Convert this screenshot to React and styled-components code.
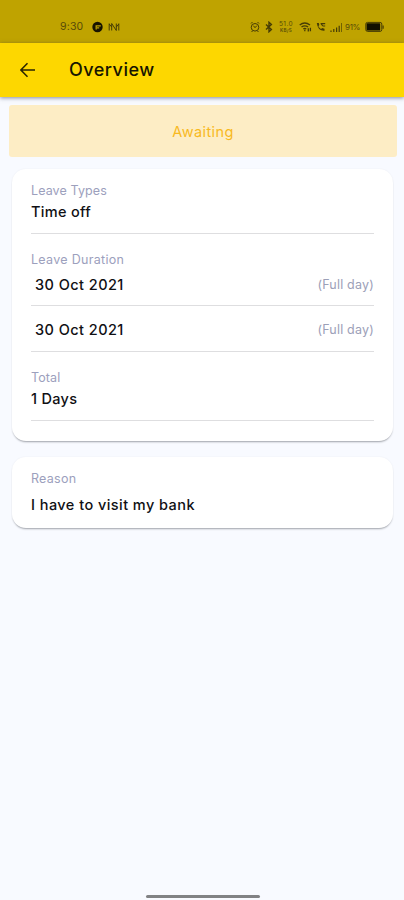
import styled, { createGlobalStyle } from "styled-components";

const GlobalStyle = createGlobalStyle`
  * {
    box-sizing: border-box;
  }

  body {
    margin: 0;
    background-color: #f8faff;
    font-family: Inter, Roboto, "Liberation Sans", sans-serif;
  }
`;

const Screen = styled.div`
  display: flex;
  flex-direction: column;
  width: 100%;
  height: 900px;
  overflow: hidden;
  background-color: #f8faff;
`;

const StatusBar = styled.div`
  display: flex;
  align-items: center;
  height: 43px;
  flex-shrink: 0;
  padding: 10px 20px 0 60px;
  background-color: #bfa300;
  color: #574b08;
`;

const Clock = styled.span`
  width: 32px;
  font-size: 10.5px;
  line-height: 14px;
  letter-spacing: 0.2px;
`;

const StatusIcon = styled.svg`
  display: block;
  flex-shrink: 0;
  width: ${(props) => props.$width}px;
  height: 12px;
  margin-left: ${(props) => props.$gap || 0}px;
  fill: none;
  stroke: #463c05;
`;

const Spacer = styled.div`
  flex: 1;
`;

const Speed = styled.div`
  display: flex;
  flex-direction: column;
  align-items: center;
  width: 16px;
  margin-left: 5px;
  font-size: 6.5px;
  line-height: 8px;
  letter-spacing: 0.4px;

  small {
    font-size: 4.5px;
    font-weight: 600;
    line-height: 6px;
    letter-spacing: 0.3px;
  }
`;

const Percent = styled.span`
  width: 16px;
  margin-left: 3px;
  font-size: 8px;
  line-height: 12px;
  letter-spacing: -0.3px;
`;

const AppBar = styled.header`
  display: flex;
  align-items: center;
  height: 54px;
  flex-shrink: 0;
  padding-left: 20px;
  background-color: #fdd700;
  box-shadow: 0 1px 4px rgba(40, 50, 80, 0.55);
`;

const BackButton = styled.button`
  display: flex;
  width: 16px;
  height: 16px;
  padding: 0;
  border: none;
  background: none;
`;

const Title = styled.h1`
  margin: 0 0 0 33px;
  color: #171500;
  font-size: 18px;
  font-weight: 500;
  line-height: 24px;
  letter-spacing: 0.5px;
`;

const Banner = styled.div`
  display: flex;
  justify-content: center;
  align-items: center;
  height: 52px;
  flex-shrink: 0;
  margin: 8px 7px 0 9px;
  border-radius: 3px;
  background-color: #fdedc5;
  color: #f8b91f;
  font-size: 14.5px;
  letter-spacing: 0.4px;
`;

const Card = styled.section`
  height: ${(props) => props.$height}px;
  flex-shrink: 0;
  margin: ${(props) => props.$top}px 11px 0 12px;
  padding: 12px 19px 0;
  border-radius: 14px;
  background-color: #fff;
  box-shadow: 0 2px 2px -1px rgba(30, 35, 45, 0.4), 0 0 2px rgba(30, 35, 45, 0.06);
`;

const Field = styled.div`
  height: ${(props) => props.$height}px;
  margin-bottom: ${(props) => props.$after || 0}px;
  border-bottom: 1px solid #dedee0;
`;

const Label = styled.div`
  padding-top: 1px;
  color: #9ca0bd;
  font-size: 12.5px;
  line-height: 18px;
  letter-spacing: ${(props) => props.$spacing || 0.1}px;
`;

const Value = styled.div`
  margin-top: ${(props) => props.$top || 0}px;
  color: #101014;
  font-size: 14.5px;
  font-weight: 500;
  line-height: 24px;
  letter-spacing: ${(props) => props.$spacing || 0.3}px;
`;

const DateRow = styled.div`
  display: flex;
  justify-content: space-between;
  align-items: center;
  padding: ${(props) => props.$top}px 0 0 4px;
`;

const DayPart = styled.span`
  color: #9ca0b8;
  font-size: 12.5px;
  line-height: 18px;
  letter-spacing: 0.2px;
`;

const HomeIndicator = styled.div`
  width: 114px;
  height: 3px;
  flex-shrink: 0;
  margin: auto auto 2px 146px;
  border-radius: 2px;
  background-color: #818284;
`;

const dates = [
  { date: "30 Oct 2021", part: "(Full day)" },
  { date: "30 Oct 2021", part: "(Full day)" },
];

const StatusIcons = () => (
  <>
    <StatusIcon $width={10} viewBox="0 0 10 12" strokeWidth="1">
      <path d="M1 2.5 2.5 1M9 2.5 7.5 1M2.5 10 1.5 11M7.5 10l1 1" />
      <circle cx="5" cy="6.3" r="3.8" />
      <path d="m3.4 4.7 1.6 2 1.8-2" />
    </StatusIcon>
    <StatusIcon $width={8} $gap={5} viewBox="0 0 8 12" strokeWidth="1.4">
      <path d="m1 3.4 5.4 5L4 10.7V1.3l2.4 2.3L1 8.6" />
    </StatusIcon>
    <Speed>
      51.0
      <small>KB/S</small>
    </Speed>
    <StatusIcon $width={13} $gap={5} viewBox="0 0 13 12" strokeWidth="1.3">
      <path d="M.7 4.1Q5.7-.1 11 4.1M2.5 6.1q3.3-2.6 6.6 0M4.3 8q1.5-1.1 3 0" />
      <path d="M5.8 8.5v1.7M9.3 7.2v3.4M11.4 6.8v3.4" />
    </StatusIcon>
    <StatusIcon $width={10} $gap={4} viewBox="0 0 10 12" strokeWidth="1.1">
      <path
        d="M.8 2h2l.5 2-.9 1.2q.8 1.7 2.6 2.7l1.2-.9 2.3.7v2Q1.8 10.2.8 2Z"
        fill="#463c05"
        stroke="none"
      />
      <path d="M4.6 2.6h4.6M6.6 5h2.6M5 2.6l1.6 2.2" />
    </StatusIcon>
    <StatusIcon $width={12} $gap={4} viewBox="0 0 12 12" strokeWidth="1.2">
      <path d="M1 11V9.4M3.8 11V8.1M6.6 11V6.4M9.2 11V4.7" />
      <path d="M11.6 11V2" strokeWidth=".7" />
    </StatusIcon>
    <Percent>91%</Percent>
    <StatusIcon $width={19} $gap={4} viewBox="0 0 19 12">
      <rect x=".8" y="1.4" width="16" height="9" rx="1.7" />
      <rect x="1.6" y="2.3" width="13.6" height="7.2" rx=".5" fill="#111000" stroke="none" />
      <path d="M18.1 4.5v3.3" strokeWidth="1.2" />
    </StatusIcon>
  </>
);

const App = () => {
  return (
    <>
      <GlobalStyle />
      <Screen>
        <StatusBar>
          <Clock>9:30</Clock>
          <StatusIcon $width={11} viewBox="0 0 11 12">
            <circle cx="5.5" cy="6" r="5.2" fill="#171300" stroke="none" />
            <path d="M4.2 8.4V4.9h4.6M5 6.9h2.2" stroke="#bfa300" strokeWidth="1.3" />
          </StatusIcon>
          <StatusIcon $width={12} $gap={5} viewBox="0 0 12 12" strokeWidth="1">
            <path d="M1.2 2.5v7M10.8 2.5v7M3.7 9.5v-7l4.6 7v-7M1.2 3l2.5 3M8.3 6l2.5-3" />
          </StatusIcon>
          <Spacer />
          <StatusIcons />
        </StatusBar>
        <AppBar>
          <BackButton aria-label="Back">
            <svg width="16" height="16" viewBox="0 0 16 16" fill="none" stroke="#292500" strokeWidth="1.5">
              <path d="M15 8H1M7.5 1.2.9 8l6.6 6.8" />
            </svg>
          </BackButton>
          <Title>Overview</Title>
        </AppBar>
        <Banner>Awaiting</Banner>
        <Card $height={272} $top={12}>
          <Field $height={53} $after={16}>
            <Label>Leave Types</Label>
            <Value>Time off</Value>
          </Field>
          <Label $spacing={0.3}>Leave Duration</Label>
          {dates.map((item, index) => (
            <Field key={index} $height={index === 0 ? 37 : 46} $after={index === 0 ? 0 : 16}>
              <DateRow $top={index === 0 ? 4 : 12}>
                <Value $spacing={0.45}>{item.date}</Value>
                <DayPart>{item.part}</DayPart>
              </DateRow>
            </Field>
          ))}
          <Field $height={53}>
            <Label>Total</Label>
            <Value>1 Days</Value>
          </Field>
        </Card>
        <Card $height={71} $top={16}>
          <Label $spacing={0.25}>Reason</Label>
          <Value $top={5} $spacing={0.45}>
            I have to visit my bank
          </Value>
        </Card>
        <HomeIndicator />
      </Screen>
    </>
  );
};

export default App;
